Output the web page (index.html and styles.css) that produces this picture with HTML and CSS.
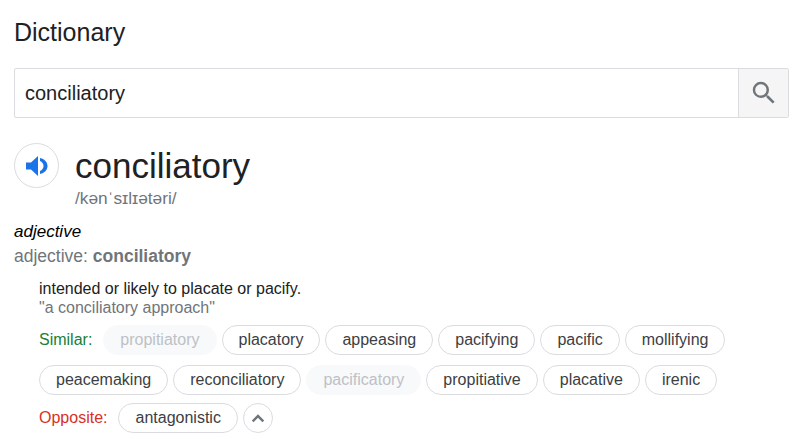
FILE: index.html
```html
<!DOCTYPE html>
<html lang="en">
<head>
  <meta charset="UTF-8" />
  <title>Dictionary</title>
  <link rel="stylesheet" href="styles.css">
</head>
<body>
  <h1 class="title">Dictionary</h1>

  <div class="search">
    <div class="search-input">conciliatory</div>
    <div class="search-btn">
      <svg width="30" height="30" viewBox="0 0 24 24"><path fill="#70757a" d="M15.5 14h-.79l-.28-.27A6.471 6.471 0 0 0 16 9.5 6.5 6.5 0 1 0 9.5 16c1.61 0 3.09-.59 4.23-1.57l.27.28v.79l5 4.99L20.49 19l-4.99-5zm-6 0C7.01 14 5 11.99 5 9.5S7.01 5 9.5 5 14 7.01 14 9.5 11.99 14 9.5 14z"/></svg>
    </div>
  </div>

  <div class="head">
    <div class="speaker">
      <svg width="22" height="20" viewBox="0 0 22 20"><path fill="#1a73e8" d="M0 6.500v7h5l7 6.500V0L5 6.500z"/><path fill="#1a73e8" d="M14 2c4.500 1 7.500 4 7.500 8s-3 7-7.500 8v-3c2-.8 3.500-2.700 3.500-5s-1.500-4.200-3.500-5z"/></svg>
    </div>
    <div>
      <div class="word">conciliatory</div>
      <div class="phon">/kənˈsɪlɪətəri/</div>
    </div>
  </div>

  <div class="pos">adjective</div>
  <div class="forms">adjective: <b>conciliatory</b></div>

  <div class="sense">
    <div class="def">intended or likely to placate or pacify.</div>
    <div class="example">"a conciliatory approach"</div>

    <div class="chips">
      <span class="label similar">Similar:</span>
      <span class="chip off">propitiatory</span>
      <span class="chip">placatory</span>
      <span class="chip">appeasing</span>
      <span class="chip">pacifying</span>
      <span class="chip">pacific</span>
      <span class="chip">mollifying</span>
      <span class="chip">peacemaking</span>
      <span class="chip">reconciliatory</span>
      <span class="chip off">pacificatory</span>
      <span class="chip">propitiative</span>
      <span class="chip">placative</span>
      <span class="chip">irenic</span>
    </div>
    <div class="chips">
      <span class="label opposite">Opposite:</span>
      <span class="chip">antagonistic</span>
      <span class="more">
        <svg width="20" height="20" viewBox="0 0 24 24"><path fill="#70757a" d="M12 7.600l-7.400 7.400 2 2 5.400-5.400 5.400 5.400 2-2z"/></svg>
      </span>
    </div>
  </div>
</body>
</html>
```

FILE: styles.css
```css
body {
  margin: 0;
  padding: 0 18px 0 14px;
  background-color: #ffffff;
  color: #202124;
  font-family: "Liberation Sans", Arial, sans-serif;
}

.title {
  margin: 0;
  padding-top: 16px;
  font-size: 25px;
  line-height: 32px;
  font-weight: 400;
}

.search {
  display: flex;
  height: 48px;
  margin-top: 20px;
  border: 1px solid #dadce0;
  border-radius: 2px;
}

.search-input {
  flex: 1;
  padding-left: 10px;
  font-size: 20px;
  line-height: 48px;
}

.search-btn {
  display: flex;
  align-items: center;
  justify-content: center;
  width: 49px;
  border-left: 1px solid #dadce0;
  background-color: #f5f5f5;
}

.head {
  display: flex;
  gap: 16px;
  margin-top: 25px;
}

.speaker {
  display: flex;
  align-items: center;
  justify-content: center;
  width: 43px;
  height: 43px;
  border: 1px solid #dadce0;
  border-radius: 50%;
}

.word {
  padding-top: 1px;
  font-size: 35px;
  line-height: 44px;
}

.phon {
  color: #70757a;
  font-size: 17.3px;
  line-height: 20px;
}

.pos {
  margin-top: 12px;
  color: #000000;
  font-size: 17px;
  font-style: italic;
  line-height: 24px;
}

.forms {
  color: #70757a;
  font-size: 17.5px;
  line-height: 24px;
}

.sense {
  padding-left: 25px;
  margin-top: 12px;
}

.def {
  color: #202124;
  font-size: 16px;
  line-height: 18px;
}

.example {
  padding-top: 1px;
  color: #70757a;
  font-size: 16px;
  line-height: 18px;
}

.chips {
  display: flex;
  flex-wrap: wrap;
  align-items: center;
  gap: 10px 5px;
  margin-top: 8px;
}

.label {
  margin-right: 6px;
  font-size: 16px;
}

.similar {
  color: #188038;
}

.opposite {
  color: #d93025;
}

.chip {
  padding: 0 16px;
  border: 1px solid #dadce0;
  border-radius: 15px;
  color: #3c4043;
  font-size: 16px;
  line-height: 28px;
}

.chip.off {
  border-color: #f8f9fa;
  background-color: #f8f9fa;
  color: #bdc1c6;
}

.more {
  display: flex;
  align-items: center;
  justify-content: center;
  width: 28px;
  height: 28px;
  border: 1px solid #dadce0;
  border-radius: 50%;
}
```
